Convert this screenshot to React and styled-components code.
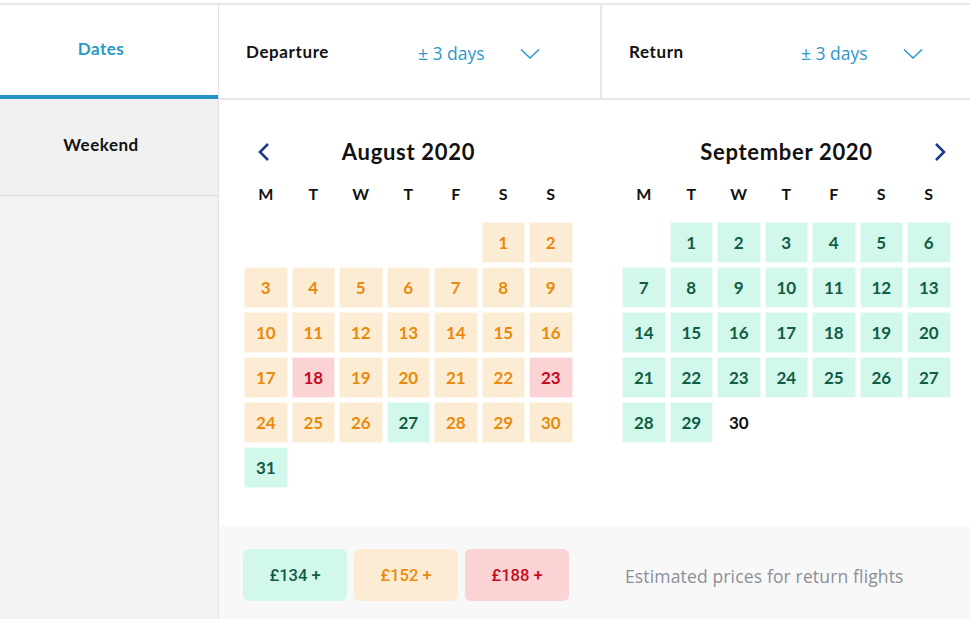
import React from "react";
import styled, { createGlobalStyle } from "styled-components";

const Global = createGlobalStyle`
  html, body { margin: 0; padding: 0; background: #fff; }
  body { font-family: Lato, "Open Sans", sans-serif; color: #111; }
  * { box-sizing: border-box; }
`;

const Page = styled.div`
  display: flex;
  width: 970px;
  margin-top: 3px;
  border-top: 2px solid #e7e7eb;
`;

const Sidebar = styled.div`
  width: 219px;
  flex: none;
  background: #f2f2f2;
  border-right: 1px solid #e2e2e6;
  display: flex;
  flex-direction: column;
  height: 614px;
`;

const Tab = styled.div`
  height: ${(p) => (p.$active ? "94px" : "97px")};
  display: flex;
  align-items: center;
  justify-content: center;
  padding-right: 16px;
  padding-bottom: ${(p) => (p.$active ? "4px" : "6px")};
  font-size: 17px;
  font-weight: 700;
  letter-spacing: 0.5px;
  color: ${(p) => (p.$active ? "#2a97c8" : "#111")};
  background: ${(p) => (p.$active ? "#fff" : "#f1f1f2")};
  border-bottom: ${(p) => (p.$active ? "4px solid #2394c4" : "1px solid #d9d9de")};
`;

const Main = styled.div`
  flex: 1;
  display: flex;
  flex-direction: column;
`;

const Header = styled.div`
  display: flex;
  height: 95px;
  border-bottom: 2px solid #e7e7eb;
`;

const HeaderSection = styled.div`
  width: ${(p) => p.$w}px;
  flex: none;
  display: flex;
  align-items: center;
  padding-left: 27px;
  border-right: ${(p) => (p.$divider ? "2px solid #e7e7eb" : "none")};
`;

const HeaderLabel = styled.div`
  width: 172px;
  font-size: 17px;
  font-weight: 700;
  letter-spacing: 0.6px;
  color: #111;
`;

const HeaderValue = styled.div`
  width: 102px;
  font-family: "Open Sans", sans-serif;
  font-size: 17.5px;
  color: #2e98cc;
  padding-top: 2px;
`;

const Chevron = styled.svg`
  width: 20px;
  height: 12px;
  margin-top: 5px;
`;

const CalendarArea = styled.div`
  display: flex;
  gap: 49px;
  padding: 36px 0 38px 25px;
`;

const Month = styled.div`
  width: 329px;
  display: flex;
  flex-direction: column;
`;

const MonthHeader = styled.div`
  position: relative;
  height: 30px;
  display: flex;
  align-items: center;
  justify-content: center;
`;

const MonthTitle = styled.div`
  font-size: 22px;
  font-weight: 700;
  color: #111;
  letter-spacing: 0.7px;
`;

const NavArrow = styled.svg`
  position: absolute;
  top: 6px;
  width: 16px;
  height: 20px;
  ${(p) => (p.$side === "left" ? "left: 12px;" : "right: 3px;")}
`;

const WeekRow = styled.div`
  display: grid;
  grid-template-columns: repeat(7, 43.5px);
  column-gap: 4px;
  margin-top: 18px;
  height: 20px;
`;

const WeekDay = styled.div`
  text-align: center;
  font-size: 16px;
  font-weight: 700;
  line-height: 20px;
`;

const DaysGrid = styled.div`
  display: grid;
  grid-template-columns: repeat(7, 43.5px);
  grid-auto-rows: 41px;
  gap: 4px;
  margin-top: 18px;
`;

const palette = {
  orange: { bg: "#fcecd4", fg: "#e98a0c" },
  green: { bg: "#d1f8ea", fg: "#115c45" },
  red: { bg: "#fbd3d5", fg: "#c30d1d" },
  none: { bg: "transparent", fg: "#111" },
};

const Day = styled.div`
  display: flex;
  align-items: center;
  justify-content: center;
  font-size: 17px;
  font-weight: 700;
  background: ${(p) => palette[p.$tone].bg};
  color: ${(p) => palette[p.$tone].fg};
  border: 1px solid ${(p) => (p.$tone === "none" ? "transparent" : "rgba(255,255,255,0.6)")};
  grid-column-start: ${(p) => p.$start || "auto"};
`;

const Legend = styled.div`
  height: 93px;
  background: #f8f8f8;
  display: flex;
  align-items: flex-start;
  padding: 23px 0 0 24px;
  gap: 7px;
`;

const Chip = styled.div`
  width: 104px;
  height: 52px;
  border-radius: 6px;
  display: flex;
  align-items: center;
  justify-content: center;
  font-family: Roboto, sans-serif;
  font-weight: 500;
  font-size: 16.5px;
  background: ${(p) => palette[p.$tone].bg};
  color: ${(p) => palette[p.$tone].fg};
`;

const LegendNote = styled.div`
  margin: 15px 0 0 49px;
  line-height: 24px;
  font-family: "Open Sans", sans-serif;
  font-size: 17.5px;
  letter-spacing: 0.15px;
  color: #8a8f98;
`;

const WEEK = ["M", "T", "W", "T", "F", "S", "S"];

const ChevronDown = () => (
  <Chevron viewBox="0 0 20 12">
    <path d="M1 1.5 L10 10 L19 1.5" fill="none" stroke="#2e98cc" strokeWidth="1.6" />
  </Chevron>
);

function MonthView({ title, offset, days, toneOf, nav }) {
  const list = Array.from({ length: days }, (_, i) => i + 1);
  return (
    <Month>
      <MonthHeader>
        {nav === "left" && (
          <NavArrow $side="left" viewBox="0 0 16 20">
            <path d="M12 2 L4 10 L12 18" fill="none" stroke="#1b3a8c" strokeWidth="2.6" />
          </NavArrow>
        )}
        <MonthTitle>{title}</MonthTitle>
        {nav === "right" && (
          <NavArrow $side="right" viewBox="0 0 16 20">
            <path d="M4 2 L12 10 L4 18" fill="none" stroke="#1b3a8c" strokeWidth="2.6" />
          </NavArrow>
        )}
      </MonthHeader>
      <WeekRow>
        {WEEK.map((d, i) => (
          <WeekDay key={i}>{d}</WeekDay>
        ))}
      </WeekRow>
      <DaysGrid>
        {list.map((d) => (
          <Day key={d} $tone={toneOf(d)} $start={d === 1 ? offset + 1 : undefined}>
            {d}
          </Day>
        ))}
      </DaysGrid>
    </Month>
  );
}

export default function App() {
  const augTone = (d) => (d === 18 || d === 23 ? "red" : d === 27 || d === 31 ? "green" : "orange");
  const sepTone = (d) => (d === 30 ? "none" : "green");
  return (
    <>
      <Global />
      <Page>
        <Sidebar>
          <Tab $active>Dates</Tab>
          <Tab>Weekend</Tab>
        </Sidebar>
        <Main>
          <Header>
            <HeaderSection $w={383} $divider>
              <HeaderLabel>Departure</HeaderLabel>
              <HeaderValue>± 3 days</HeaderValue>
              <ChevronDown />
            </HeaderSection>
            <HeaderSection $w={368}>
              <HeaderLabel>Return</HeaderLabel>
              <HeaderValue>± 3 days</HeaderValue>
              <ChevronDown />
            </HeaderSection>
          </Header>
          <CalendarArea>
            <MonthView title="August 2020" offset={5} days={31} toneOf={augTone} nav="left" />
            <MonthView title="September 2020" offset={1} days={30} toneOf={sepTone} nav="right" />
          </CalendarArea>
          <Legend>
            <Chip $tone="green">£134 +</Chip>
            <Chip $tone="orange">£152 +</Chip>
            <Chip $tone="red">£188 +</Chip>
            <LegendNote>Estimated prices for return flights</LegendNote>
          </Legend>
        </Main>
      </Page>
    </>
  );
}
